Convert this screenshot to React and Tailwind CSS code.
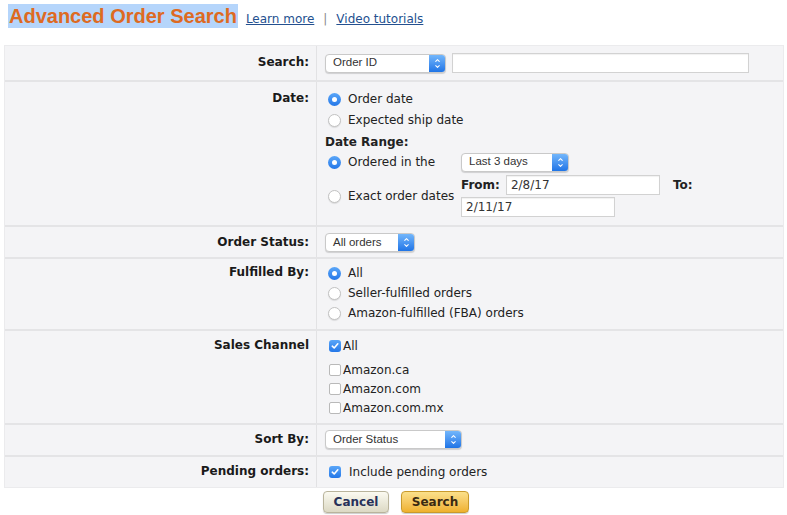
import { ChevronDown, ChevronUp } from 'lucide-react';

// stepper-style select, like the mac native popup
function Select({ label, className = '', arrow = 'w-[16px]' }) {
  return (
    <div
      className={`flex h-[19px] items-stretch overflow-hidden rounded-[4px] border border-[#c9c9c9] bg-white shadow-[0_1px_1px_rgba(0,0,0,0.15)] ${className}`}
    >
      <span className="flex flex-1 items-center pl-[7px] font-['Liberation_Sans',sans-serif] text-[11.5px] text-[#333]">
        {label}
      </span>
      <span
        className={`flex flex-col items-center justify-center bg-gradient-to-b from-[#72b6fb] to-[#1e74e6] text-white ${arrow}`}
      >
        <ChevronUp size={7} strokeWidth={3.5} className="-mb-[1px]" />
        <ChevronDown size={7} strokeWidth={3.5} />
      </span>
    </div>
  );
}

function Input({ value = '', className = '' }) {
  return (
    <div
      className={`flex items-center border border-[#d2d2d2] bg-white pl-[4px] text-[12px] text-[#333] shadow-[inset_0_1px_1px_rgba(0,0,0,0.06)] ${className}`}
    >
      {value}
    </div>
  );
}

function Radio({ checked, children, className = '' }) {
  return (
    <div className={`flex h-[20px] items-center gap-[7px] ${className}`}>
      {checked ? (
        <span className="grid h-[13px] w-[13px] shrink-0 place-items-center rounded-full bg-gradient-to-b from-[#5aa6f8] to-[#2377e8]">
          <span className="h-[5px] w-[5px] rounded-full bg-white" />
        </span>
      ) : (
        <span className="h-[13px] w-[13px] shrink-0 rounded-full border border-[#c2c2c2] bg-white shadow-[0_1px_1px_rgba(0,0,0,0.1)]" />
      )}
      <span className="whitespace-nowrap">{children}</span>
    </div>
  );
}

function Check({ checked, children, className = '' }) {
  return (
    <div className={`flex h-[19px] items-center gap-[2px] ${className}`}>
      {checked ? (
        <span className="grid h-[12px] w-[12px] shrink-0 place-items-center rounded-[3px] bg-gradient-to-b from-[#5aa6f8] to-[#2377e8]">
          <svg width="8" height="8" viewBox="0 0 8 8" fill="none">
            <path d="M1.3 4.2 L3.2 6 L6.8 1.8" stroke="white" strokeWidth="1.6" strokeLinecap="round" strokeLinejoin="round" />
          </svg>
        </span>
      ) : (
        <span className="h-[12px] w-[12px] shrink-0 rounded-[2px] border border-[#b9b9b9] bg-white" />
      )}
      <span className="whitespace-nowrap">{children}</span>
    </div>
  );
}

function Row({ label, height, children, pt = 'pt-0', last = false }) {
  return (
    <div className={`flex ${height} ${last ? '' : 'border-b-2 border-[#e4e4e6]'}`}>
      <div className={`w-[312px] shrink-0 border-r border-[#e2e2e4] pr-[7px] text-right font-bold text-[#1a1a1a] ${pt}`}>
        {label}
      </div>
      <div className={`flex-1 pl-[8px] ${pt}`}>{children}</div>
    </div>
  );
}

export default function App() {
  return (
    <div className="h-[515px] w-[787px] overflow-hidden bg-white font-['DejaVu_Sans',sans-serif] text-[12px] text-[#222]">
      {/* heading */}
      <div className="flex h-[45px] items-start pl-[8px] pt-[4px]">
        <h1 className="bg-[#b5d5fb] px-[1px] font-['Liberation_Sans',sans-serif] text-[20px] leading-[24px] font-bold text-[#de6a22]">
          Advanced Order Search
        </h1>
        <div className="ml-[8px] flex items-center pt-[6px] text-[12px] text-[#24508f]">
          <a className="underline">Learn more</a>
          <span className="mx-[9px] text-[#888]">|</span>
          <a className="underline">Video tutorials</a>
        </div>
      </div>

      {/* form */}
      <div className="ml-[4px] w-[780px] border border-[#ebebed] bg-[#f4f4f6]">
        <Row label="Search:" height="h-[36px]" pt="pt-[7px]">
          <div className="flex items-center gap-[6px]">
            <Select label="Order ID" className="w-[121px]" />
            <Input className="h-[20px] w-[297px]" />
          </div>
        </Row>

        <Row label="Date:" height="h-[145px]" pt="pt-[7px]">
          <Radio checked className="ml-[3px]">Order date</Radio>
          <Radio className="ml-[3px] mt-[1px]">Expected ship date</Radio>
          <div className="mt-[2px] flex h-[20px] items-center font-bold">Date Range:</div>
          <div className="grid grid-cols-[136px_1fr]">
            <Radio checked className="ml-[3px]">Ordered in the</Radio>
            <div className="flex items-center">
              <Select label="Last 3 days" className="w-[108px]" />
            </div>
            <div className="mt-[3px] flex items-center">
              <Radio className="ml-[3px]">Exact order dates</Radio>
            </div>
            <div className="mt-[3px]">
              <div className="flex items-center">
                <span className="font-bold">From:</span>
                <Input value="2/8/17" className="ml-[6px] h-[20px] w-[154px]" />
                <span className="ml-[13px] font-bold">To:</span>
              </div>
              <Input value="2/11/17" className="mt-[2px] h-[20px] w-[154px]" />
            </div>
          </div>
        </Row>

        <Row label="Order Status:" height="h-[32px]" pt="pt-[6px]">
          <Select label="All orders" className="w-[90px]" />
        </Row>

        <Row label="Fulfilled By:" height="h-[72px]" pt="pt-[4px]">
          <Radio checked className="ml-[3px]">All</Radio>
          <Radio className="ml-[3px]">Seller-fulfilled orders</Radio>
          <Radio className="ml-[3px]">Amazon-fulfilled (FBA) orders</Radio>
        </Row>

        <Row label="Sales Channel" height="h-[94px]" pt="pt-[5px]">
          <Check checked className="ml-[4px]">All</Check>
          <Check className="ml-[4px] mt-[5px]">Amazon.ca</Check>
          <Check className="ml-[4px]">Amazon.com</Check>
          <Check className="ml-[4px]">Amazon.com.mx</Check>
        </Row>

        <Row label="Sort By:" height="h-[32px]" pt="pt-[5px]">
          <Select label="Order Status" className="w-[137px]" />
        </Row>

        <Row label="Pending orders:" height="h-[30px]" pt="pt-[5px]" last>
          <Check checked className="ml-[4px] gap-[8px]">Include pending orders</Check>
        </Row>
      </div>

      {/* buttons */}
      <div className="mt-[3px] flex gap-[12px] pl-[323px]">
        <button className="h-[22px] w-[66px] rounded-[4px] border border-[#b9b49c] bg-gradient-to-b from-[#fbfaf1] to-[#dcd9c4] text-[12px] font-bold text-[#27315a] shadow-[0_1px_1px_rgba(0,0,0,0.2)]">
          Cancel
        </button>
        <button className="h-[22px] w-[68px] rounded-[4px] border border-[#c99a2c] bg-gradient-to-b from-[#fbe08a] to-[#efb12b] text-[12px] font-bold text-[#3a2a12] shadow-[0_1px_1px_rgba(0,0,0,0.2)]">
          Search
        </button>
      </div>
    </div>
  );
}
